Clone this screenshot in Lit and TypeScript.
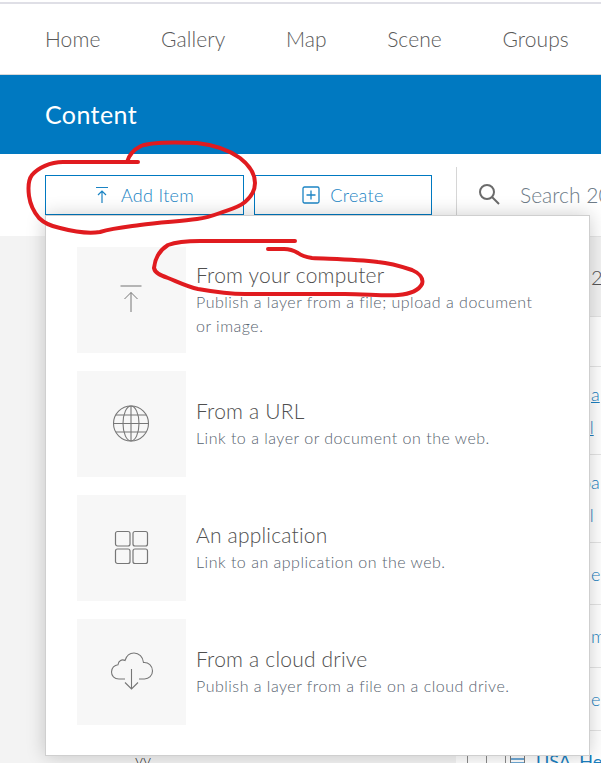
import { LitElement, html, css, svg } from "lit";
import { customElement } from "lit/decorators.js";

const items = [
  { t: "From your computer", d: "Publish a layer from a file; upload a document or image.", i: "up" },
  { t: "From a URL", d: "Link to a layer or document on the web.", i: "globe" },
  { t: "An application", d: "Link to an application on the web.", i: "grid" },
  { t: "From a cloud drive", d: "Publish a layer from a file on a cloud drive.", i: "cloud" },
];

const icons: Record<string, any> = {
  up: svg`<svg width="40" height="40" viewBox="0 0 40 40" fill="none" stroke="#777" stroke-width="1"><path d="M8.500 6h21" stroke="#999" stroke-width="1.400"/><path d="M19 32V12.500M12.500 19L19 12.500 25.500 19"/></svg>`,
  globe: svg`<svg width="40" height="40" viewBox="0 0 40 40" fill="none" stroke="#777" stroke-width="1.100"><circle cx="19" cy="19.500" r="17.500"/><ellipse cx="19" cy="19.500" rx="8" ry="17.500"/><path d="M19 2v35M1.500 19.500h35M4 11h30M4 28h30"/></svg>`,
  grid: svg`<svg width="40" height="40" viewBox="0 0 40 40" fill="none" stroke="#777" stroke-width="1.200"><rect x="3.500" y="3.500" width="14.500" height="14.500" rx="2"/><rect x="21" y="3.500" width="14.500" height="14.500" rx="2"/><rect x="3.500" y="21" width="14.500" height="14.500" rx="2"/><rect x="21" y="21" width="14.500" height="14.500" rx="2"/></svg>`,
  cloud: svg`<svg width="44" height="40" viewBox="0 0 44 40" fill="none" stroke="#777" stroke-width="1.100"><path d="M15 27H9C4 27 1.500 23.500 1.500 20c0-4 3-7 6.500-7.300C8.500 8.500 12 7 15 8.500 16.500 3.500 20 1 24 1c5 0 9 4 9.500 9.500 5-.5 9 3.500 9 8.500 0 4.500-3.500 8-8 8H29"/><path d="M21.500 17v20M15 30.500l6.500 6.500 6.500-6.500"/></svg>`,
};

@customElement("app-root")
export class AppRoot extends LitElement {
  static styles = css`
    :host {
      display: block;
      position: relative;
      width: 601px;
      height: 763px;
      overflow: hidden;
      background: #fff;
      font-family: "Lato", "Open Sans", sans-serif;
      font-weight: 300;
      color: #4c4c4c;
    }
    .topline { height: 2px; margin-top: 2px; background: #dfdfe6; }
    .nav {
      height: 71px;
      box-sizing: border-box;
      display: flex;
      align-items: center;
      gap: 60.5px;
      padding: 0 0 2px 45px;
      border-bottom: 1px solid #d9d9d9;
      font-size: 21px;
      letter-spacing: 0.1px;
      color: #595959;
      white-space: nowrap;
    }
    .banner {
      height: 79px;
      box-sizing: border-box;
      background: #0079c1;
      color: #fff;
      display: flex;
      align-items: center;
      padding: 0 0 2px 45px;
      font-size: 25px;
      font-weight: 400;
      letter-spacing: 0.4px;
    }
    .toolbar {
      height: 82px;
      display: flex;
      padding: 21px 0 0 45px;
      box-sizing: border-box;
      gap: 10px;
      white-space: nowrap;
    }
    .btn {
      height: 40px;
      flex: none;
      box-sizing: border-box;
      border: 1px solid #0079c1;
      display: flex;
      align-items: center;
      justify-content: center;
      color: #1b84c4;
      font-size: 18px;
      font-weight: 300;
      letter-spacing: 0.3px;
    }
    .add { width: 199px; gap: 12px; }
    .create { width: 178px; gap: 10px; }
    .divider { width: 1px; height: 48px; flex: none; margin: -8px 0 0 14px; background: #d6d6d6; }
    .search {
      display: flex;
      align-items: center;
      height: 38px;
      gap: 20px;
      margin-left: 11px;
      color: #6e7c88;
      font-size: 21px;
    }
    .body { display: grid; grid-template-columns: 456px 1fr; height: 527px; }
    .side { background: #f3f3f3; position: relative; font-size: 16px; }
    .stub { position: absolute; left: 135px; top: 514px; font-size: 16px; color: #333; }
    .list { display: flex; flex-direction: column; font-size: 18px; color: #1b7fc0; }
    .band {
      height: 80px;
      background: #f2f2f2;
      display: flex;
      align-items: center;
      box-sizing: border-box;
      padding-left: 135px;
      border-top: 1px solid #e6e6e6;
      font-size: 20px;
      color: #555;
    }
    .row {
      box-sizing: border-box;
      border-top: 1px solid #e4e4e4;
      padding-left: 135px;
      display: flex;
      flex-direction: column;
      justify-content: center;
      gap: 11px;
      white-space: nowrap;
    }
    .u { text-decoration: underline; }
    .back { margin-left: -10px; }
    .menu {
      position: absolute;
      left: 45px;
      top: 215px;
      width: 545px;
      height: 541px;
      box-sizing: border-box;
      background: #fff;
      border: 1px solid #cfcfcf;
      box-shadow: 0 0 18px rgba(0, 0, 0, 0.2);
      padding: 31px 0 0 31px;
      display: flex;
      flex-direction: column;
      gap: 18px;
    }
    .item { display: flex; gap: 10px; height: 106px; align-items: center; }
    .tile {
      width: 109px;
      height: 106px;
      flex: none;
      background: #f7f7f7;
      display: flex;
      align-items: center;
      justify-content: center;
    }
    .title { font-size: 21px; line-height: 26px; margin-bottom: 2px; letter-spacing: 0.2px; color: #4f4f4f; }
    .desc { font-size: 16px; line-height: 24px; letter-spacing: 0.5px; color: #56626e; width: 345px; font-weight: 300; }
    .ink { position: absolute; left: 0; top: 0; pointer-events: none; }
    .tail { position: absolute; left: 467px; top: 750px; display: flex; align-items: flex-start; font-size: 18px; color: #1b7fc0; font-weight: 400; white-space: nowrap; }
    .box { width: 20px; height: 20px; border: 1px solid #8a8a8a; box-sizing: border-box; margin-right: -1px; }
    .doc { width: 15px; height: 16px; margin: 5px 11px 0 5px; box-sizing: border-box; border: 1px solid #7a7a7a; border-top: none; background: linear-gradient(#fff 3px, #6fa9d6 3px, #6fa9d6 5px, #fff 5px, #fff 7px, #6fa9d6 7px, #6fa9d6 9px, #fff 9px); }
  `;

  render() {
    return html`
      <div class="topline"></div>
      <nav class="nav"><span>Home</span><span>Gallery</span><span>Map</span><span>Scene</span><span>Groups</span></nav>
      <header class="banner">Content</header>
      <div class="toolbar">
        <div class="btn add">
          <svg width="14" height="18" viewBox="0 0 14 18" fill="none" stroke="#1b84c4" stroke-width="1.200"><path d="M1 1.500h12M7 17V5M3 9l4-4 4 4"/></svg>
          <span>Add Item</span>
        </div>
        <div class="btn create">
          <svg width="18" height="18" viewBox="0 0 18 18" fill="none" stroke="#1b84c4" stroke-width="1.300"><rect x="1" y="1" width="16" height="16" rx="1.500"/><path d="M9 4.500v9M4.500 9h9"/></svg>
          <span>Create</span>
        </div>
        <div class="divider"></div>
        <div class="search">
          <svg width="22" height="22" viewBox="0 0 22 22" fill="none" stroke="#6b6b6b" stroke-width="2"><circle cx="9" cy="9" r="7"/><path d="M14 14l7 7"/></svg>
          <span>Search 20</span>
        </div>
      </div>
      <div class="body">
        <aside class="side"><span class="stub">yy</span></aside>
        <section class="list">
          <div class="band">2</div>
          <div class="row" style="height:50px"></div>
          <div class="row" style="height:88px"><span class="u">a</span><span class="u back">al</span></div>
          <div class="row" style="height:88px"><span class="back">oa</span><span class="back">al</span></div>
          <div class="row" style="height:62px"><span>e</span></div>
          <div class="row" style="height:63px"><span>m</span></div>
          <div class="row" style="height:63px"><span>e</span></div>
          <div class="row" style="height:33px"></div>
        </section>
      </div>
      <div class="tail"><span class="box"></span><span class="box"></span><span class="doc"></span><span>USA_He</span></div>
      <div class="menu">
        ${items.map(
          (it) => html`
            <div class="item">
              <div class="tile">${icons[it.i]}</div>
              <div class="text">
                <div class="title">${it.t}</div>
                <div class="desc">${it.d}</div>
              </div>
            </div>
          `
        )}
      </div>
      <svg class="ink" width="601" height="763" viewBox="0 0 601 763" fill="none" stroke="#e01b1f" stroke-width="4" stroke-linecap="round" stroke-linejoin="round">
        <path d="M138 162H127C129 155 133 150 141 146C150 142.500 175 142 197 143C215 145 229 150 240 158C249 165 255 174 255 183C255 192 251 197 245 202C238 208 228 210 220 213C212 216 205 218 197 219C180 221.500 160 222 140 225C125 227 113 228 100 232C88 234 75 232 60 228C50 226 44 223 39 218C33 211 30 203 29 196C28 188 28 180 32 175C38 168 50 162 63 162H127"/>
        <path d="M295 241H200C188 241 176 242 168 245C160 250 155 258 154 268C155 273 160 275 168 278C178 282 188 287 198 289C215 292 230 294 245 294H345C365 294 385 296 398 295C410 294 419 290 422 284C424 278 419 273 412 270C400 266 390 263 378 262C355 259 330 259 312 258C306 257 302 256 298 253C293 250 288 249 284 249H268"/>
      </svg>
    `;
  }
}
